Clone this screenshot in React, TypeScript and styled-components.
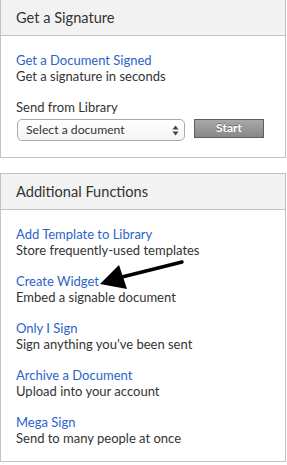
import React from "react";
import styled, { createGlobalStyle } from "styled-components";

const Global = createGlobalStyle`
  html, body { margin: 0; padding: 0; background: #fff; }
  body { font-family: Lato, "Open Sans", sans-serif; color: #333; }
`;

const Page = styled.div`
  position: relative;
  width: 287px;
  margin-top: -1px;
  display: flex;
  flex-direction: column;
  gap: 15px;
`;

const Panel = styled.section`
  width: 286px;
  box-sizing: border-box;
  border: 1px solid #c3c3c3;
  background: #fff;
`;

const Header = styled.div`
  height: 36px;
  box-sizing: border-box;
  background: #f2f2f2;
  border-bottom: 1px solid #c3c3c3;
  padding: 7px 15px 0;
  font-size: 14.6px;
  line-height: 22px;
  color: #333;
`;

const Body = styled.div<{ $bottom: number }>`
  padding: 16px 15px ${(p) => p.$bottom}px;
  display: flex;
  flex-direction: column;
  gap: 15px;
`;

const Item = styled.div`
  display: flex;
  flex-direction: column;
  font-size: 13px;
  line-height: 16px;
`;

const Link = styled.a`
  color: #2b63c9;
  text-decoration: none;
`;

const Desc = styled.span`
  color: #333;
`;

const Row = styled.div`
  display: flex;
  align-items: flex-start;
  gap: 9px;
  margin-top: 4px;
  padding-left: 1px;
`;

const SelectBox = styled.div`
  width: 168px;
  height: 22px;
  box-sizing: border-box;
  border: 1px solid #aaa;
  border-radius: 5px;
  background: linear-gradient(#fff, #f4f4f4);
  display: flex;
  align-items: center;
  justify-content: space-between;
  padding: 0 5px 0 8px;
  font-size: 12.2px;
  color: #333;
`;

const Updown = styled.svg`
  width: 7px;
  height: 11px;
`;

const StartButton = styled.div`
  width: 70px;
  height: 19px;
  box-sizing: border-box;
  border: 1px solid #5e5e5e;
  background: linear-gradient(#a8a8a8, #888);
  color: #fff;
  font-weight: bold;
  font-size: 12px;
  line-height: 16px;
  text-align: center;
  text-shadow: 0 -1px 0 rgba(0, 0, 0, 0.35);
`;

const Annotation = styled.svg`
  position: absolute;
  left: 0;
  top: 1px;
  width: 287px;
  height: 465px;
  pointer-events: none;
`;

const items = [
  ["Add Template to Library", "Store frequently-used templates"],
  ["Create Widget", "Embed a signable document"],
  ["Only I Sign", "Sign anything you\u2019ve been sent"],
  ["Archive a Document", "Upload into your account"],
  ["Mega Sign", "Send to many people at once"],
];

export default function App() {
  return (
    <>
      <Global />
      <Page>
        <Panel>
          <Header>Get a Signature</Header>
          <Body $bottom={16}>
            <Item>
              <Link href="#">Get a Document Signed</Link>
              <Desc>Get a signature in seconds</Desc>
            </Item>
            <Item>
              <Desc>Send from Library</Desc>
              <Row>
                <SelectBox>
                  <span>Select a document</span>
                  <Updown viewBox="0 0 7 11">
                    <path d="M3.5 0.5 L6.5 4.5 H0.5 Z" fill="#444" />
                    <path d="M3.5 10.5 L6.5 6.5 H0.5 Z" fill="#444" />
                  </Updown>
                </SelectBox>
                <StartButton>Start</StartButton>
              </Row>
            </Item>
          </Body>
        </Panel>
        <Panel>
          <Header>Additional Functions</Header>
          <Body $bottom={15}>
            {items.map(([l, d]) => (
              <Item key={l}>
                <Link href="#">{l}</Link>
                <Desc>{d}</Desc>
              </Item>
            ))}
          </Body>
        </Panel>
        <Annotation viewBox="0 0 287 465">
          <line x1="182" y1="262" x2="114" y2="279" stroke="#000" strokeWidth="3.5" strokeLinecap="round" />
          <path d="M100 284 L119 265 L127 289 Z" fill="#000" />
        </Annotation>
      </Page>
    </>
  );
}
